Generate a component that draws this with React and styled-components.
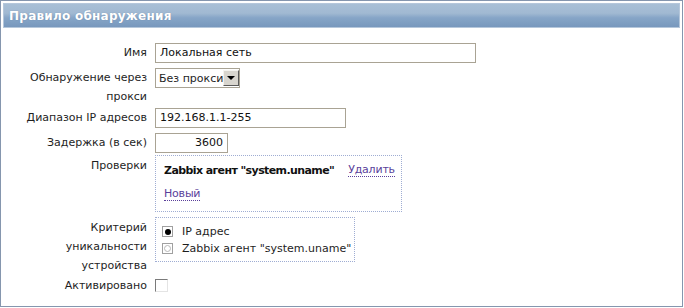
import React from 'react';
import styled, { createGlobalStyle } from 'styled-components';

const GlobalStyle = createGlobalStyle`
  html, body {
    margin: 0;
    padding: 0;
    background: #ffffff;
  }
  body {
    font-family: "DejaVu Sans", Verdana, sans-serif;
    font-size: 11px;
    color: #1e1e1e;
  }
`;

// внешняя рамка формы
const Frame = styled.div`
  width: 683px;
  height: 307px;
  box-sizing: border-box;
  border: 1px solid #8596ae;
  padding: 2px;
  background: #fff;
`;

const Header = styled.div`
  height: 25px;
  box-sizing: border-box;
  padding: 0 5px;
  display: flex;
  align-items: center;
  background: linear-gradient(
    to bottom,
    #a8bfd6 0%,
    #a1b9d2 40%,
    #86a5c7 60%,
    #7898bd 100%
  );
  border: 1px solid #b5c7db;
  color: #fff;
  font-weight: bold;
  font-size: 12px;
  letter-spacing: 0.25px;
  text-shadow: 0 0 1px rgba(60, 80, 110, 0.4);
`;

const Form = styled.div`
  display: flex;
  flex-direction: column;
  padding-top: 15px;
`;

// строка формы: подпись слева, поле справа
const Row = styled.div`
  display: flex;
  align-items: flex-start;
  gap: 8px;
  margin-top: ${p => p.$mt || 0}px;
`;

const Label = styled.div`
  flex: none;
  width: 144px;
  text-align: right;
  line-height: ${p => p.$lh || 20}px;
  padding-top: ${p => p.$pt || 0}px;
  white-space: nowrap;
`;

const Cell = styled.div`
  display: flex;
  align-items: flex-start;
  white-space: nowrap;
`;

const TextInput = styled.div`
  width: ${p => p.$w}px;
  height: 20px;
  box-sizing: border-box;
  border: 1px solid #a9a394;
  padding: 0 4px;
  line-height: 18px;
  text-align: ${p => (p.$right ? 'right' : 'left')};
  background: #fff;
  color: #111;
`;

const Select = styled.div`
  display: flex;
  align-items: center;
  width: 85px;
  height: 20px;
  box-sizing: border-box;
  border: 1px solid #a9a394;
  padding: 1px 1px 1px 3px;
  background: #fff;
  justify-content: space-between;
  white-space: nowrap;
`;

const SelectArrow = styled.span`
  flex: none;
  width: 16px;
  height: 16px;
  box-sizing: border-box;
  background: #d8d5ce;
  border-top: 1px solid #f4f3ef;
  border-left: 1px solid #f4f3ef;
  border-right: 1px solid #5a5a5a;
  border-bottom: 1px solid #5a5a5a;
  display: flex;
  align-items: center;
  justify-content: center;

  &::after {
    content: '';
    border-left: 4px solid transparent;
    border-right: 4px solid transparent;
    border-top: 4px solid #000;
  }
`;

const DottedBox = styled.div`
  width: ${p => p.$w}px;
  box-sizing: border-box;
  border: 1px dotted #9fadd3;
  padding: ${p => p.$pad};
  white-space: nowrap;
`;

const CheckLine = styled.div`
  display: flex;
  align-items: center;
  height: 20px;
  gap: 14px;
`;

const Bold = styled.span`
  font-weight: bold;
  color: #111;
  letter-spacing: -0.6px;
`;

const Link = styled.span`
  color: #5a3f9a;
  border-bottom: 1px dotted #5a3f9a;
  line-height: 13px;
  letter-spacing: -0.2px;
  cursor: pointer;
`;

const NewLine = styled.div`
  margin-top: 4px;
  height: 20px;
  display: flex;
  align-items: center;
`;

const RadioRow = styled.label`
  display: flex;
  align-items: center;
  height: 17px;
  gap: 9px;
`;

const Radio = styled.span`
  flex: none;
  width: 11px;
  height: 11px;
  box-sizing: border-box;
  border: 1px solid #a0a0a0;
  background: #fff;
  display: flex;
  align-items: center;
  justify-content: center;

  &::after {
    content: '';
    width: ${p => (p.$on ? 6 : 5)}px;
    height: ${p => (p.$on ? 6 : 5)}px;
    border-radius: 50%;
    background: ${p => (p.$on ? '#000' : '#fff')};
    border: ${p => (p.$on ? 'none' : '1px solid #b8b8b8')};
  }
`;

const Checkbox = styled.span`
  width: 13px;
  height: 13px;
  box-sizing: border-box;
  border-top: 1px solid #7a7a7a;
  border-left: 1px solid #7a7a7a;
  border-right: 1px solid #e4e4e4;
  border-bottom: 1px solid #e4e4e4;
  background: #fff;
`;

const App = () => (
  <>
    <GlobalStyle />
    <Frame>
      <Header>Правило обнаружения</Header>
      <Form>
        <Row>
          <Label>Имя</Label>
          <Cell>
            <TextInput $w={321}>Локальная сеть</TextInput>
          </Cell>
        </Row>

        <Row $mt={5}>
          <Label $lh={19}>
            Обнаружение через
            <br />
            прокси
          </Label>
          <Cell>
            <Select>
              Без прокси
              <SelectArrow />
            </Select>
          </Cell>
        </Row>

        <Row $mt={2}>
          <Label>Диапазон IP адресов</Label>
          <Cell>
            <TextInput $w={191}>192.168.1.1-255</TextInput>
          </Cell>
        </Row>

        <Row $mt={5}>
          <Label>Задержка (в сек)</Label>
          <Cell>
            <TextInput $w={73} $right>3600</TextInput>
          </Cell>
        </Row>

        <Row $mt={2}>
          <Label $lh={22}>Проверки</Label>
          <Cell>
            <DottedBox $w={247} $pad="4px 8px 7px 8px">
              <CheckLine>
                <Bold>Zabbix агент "system.uname"</Bold>
                <Link>Удалить</Link>
              </CheckLine>
              <NewLine>
                <Link>Новый</Link>
              </NewLine>
            </DottedBox>
          </Cell>
        </Row>

        <Row $mt={5}>
          <Label $lh={19} $pt={1}>
            Критерий
            <br />
            уникальности
            <br />
            устройства
          </Label>
          <Cell>
            <DottedBox $w={200} $pad="5px 6px 4px 6px">
              <RadioRow>
                <Radio $on />
                IP адрес
              </RadioRow>
              <RadioRow>
                <Radio />
                Zabbix агент "system.uname"
              </RadioRow>
            </DottedBox>
          </Cell>
        </Row>

        <Row $mt={4}>
          <Label $lh={14}>Активировано</Label>
          <Cell>
            <Checkbox />
          </Cell>
        </Row>
      </Form>
    </Frame>
  </>
);

export default App;
